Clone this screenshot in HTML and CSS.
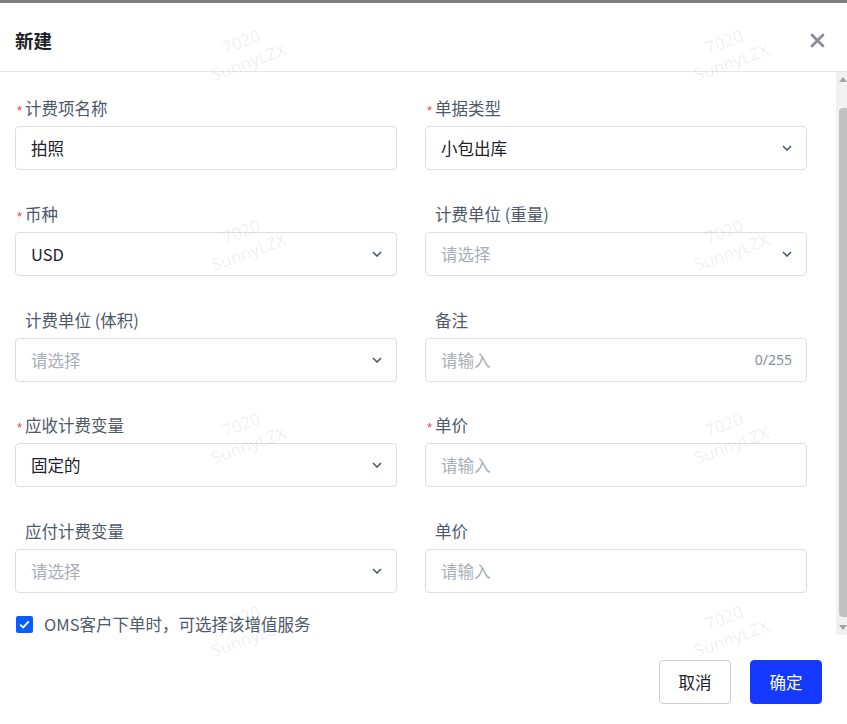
FILE: index.html
```html
<!DOCTYPE html>
<html lang="zh">
<head>
<meta charset="utf-8">
<link rel="stylesheet" href="styles.css">
</head>
<body>
<div class="page">
  <div class="backdrop-strip"></div>
  <div class="modal">
    <div class="header">
      <span class="title">新建</span>
      <svg class="close" width="15" height="15" viewBox="0 0 15 15"><path d="M2 2 L13 13 M13 2 L2 13" stroke="#868d98" stroke-width="2.8" stroke-linecap="round" fill="none"/></svg>
    </div>
    <div class="body">
      <div class="content">
        <div class="grid">
          <div class="field">
            <div class="label req">计费项名称</div>
            <div class="control"><span class="value">拍照</span></div>
          </div>
          <div class="field">
            <div class="label req">单据类型</div>
            <div class="control"><span class="value">小包出库</span><svg class="chev" width="10" height="6" viewBox="0 0 10 6"><path d="M1 1 L5 5 L9 1" stroke="#4e5969" stroke-width="1.6" fill="none"/></svg></div>
          </div>
          <div class="field">
            <div class="label req">币种</div>
            <div class="control"><span class="value">USD</span><svg class="chev" width="10" height="6" viewBox="0 0 10 6"><path d="M1 1 L5 5 L9 1" stroke="#4e5969" stroke-width="1.6" fill="none"/></svg></div>
          </div>
          <div class="field">
            <div class="label">计费单位 (重量)</div>
            <div class="control"><span class="ph">请选择</span><svg class="chev" width="10" height="6" viewBox="0 0 10 6"><path d="M1 1 L5 5 L9 1" stroke="#4e5969" stroke-width="1.6" fill="none"/></svg></div>
          </div>
          <div class="field">
            <div class="label">计费单位 (体积)</div>
            <div class="control"><span class="ph">请选择</span><svg class="chev" width="10" height="6" viewBox="0 0 10 6"><path d="M1 1 L5 5 L9 1" stroke="#4e5969" stroke-width="1.6" fill="none"/></svg></div>
          </div>
          <div class="field">
            <div class="label">备注</div>
            <div class="control"><span class="ph">请输入</span><span class="count">0/255</span></div>
          </div>
          <div class="field">
            <div class="label req">应收计费变量</div>
            <div class="control"><span class="value">固定的</span><svg class="chev" width="10" height="6" viewBox="0 0 10 6"><path d="M1 1 L5 5 L9 1" stroke="#4e5969" stroke-width="1.6" fill="none"/></svg></div>
          </div>
          <div class="field">
            <div class="label req">单价</div>
            <div class="control"><span class="ph">请输入</span></div>
          </div>
          <div class="field">
            <div class="label">应付计费变量</div>
            <div class="control"><span class="ph">请选择</span><svg class="chev" width="10" height="6" viewBox="0 0 10 6"><path d="M1 1 L5 5 L9 1" stroke="#4e5969" stroke-width="1.6" fill="none"/></svg></div>
          </div>
          <div class="field">
            <div class="label">单价</div>
            <div class="control"><span class="ph">请输入</span></div>
          </div>
        </div>
        <div class="check-row">
          <span class="checkbox"><svg width="11" height="9" viewBox="0 0 11 9"><path d="M1.2 4.6 L4.2 7.4 L9.8 1.4" stroke="#fff" stroke-width="1.8" fill="none"/></svg></span>
          <span class="check-text">OMS客户下单时，可选择该增值服务</span>
        </div>
      </div>
      <div class="scrollbar">
        <div class="arrow up"></div>
        <div class="track"><div class="thumb"></div></div>
        <div class="arrow down"></div>
      </div>
    </div>
    <div class="footer">
      <button class="btn cancel">取消</button>
      <button class="btn ok">确定</button>
    </div>
  </div>
  <div class="wm" style="left:245px;top:52px">7020<br>SunnyLZX</div>
  <div class="wm" style="left:728px;top:52px">7020<br>SunnyLZX</div>
  <div class="wm" style="left:245px;top:242px">7020<br>SunnyLZX</div>
  <div class="wm" style="left:728px;top:242px">7020<br>SunnyLZX</div>
  <div class="wm" style="left:245px;top:435px">7020<br>SunnyLZX</div>
  <div class="wm" style="left:728px;top:435px">7020<br>SunnyLZX</div>
  <div class="wm" style="left:245px;top:628px">7020<br>SunnyLZX</div>
  <div class="wm" style="left:728px;top:628px">7020<br>SunnyLZX</div>
</div>
</body>
</html>
```

FILE: styles.css
```css
* { box-sizing: border-box; }
html, body { margin: 0; padding: 0; background: #fff; }
body {
  font-family: "Noto Sans CJK SC", "Noto Sans", sans-serif;
  color: #1d2129;
}
.page {
  position: relative;
  width: 847px;
  height: 724px;
  overflow: hidden;
}
.backdrop-strip {
  height: 3px;
  background: #7f7f7f;
}
.modal {
  display: flex;
  flex-direction: column;
  height: 721px;
  background: #fff;
}
.header {
  height: 69px;
  border-bottom: 1px solid #e5e6eb;
  display: flex;
  align-items: center;
  justify-content: space-between;
  padding: 6px 22px 0 15px;
}
.title {
  font-size: 18.5px;
  font-weight: 700;
  line-height: 24px;
  color: #1d2129;
}
.close { display: block; }
.body {
  display: flex;
  height: 563px;
}
.content {
  flex: 1;
  padding: 24px 29px 0 15px;
}
.grid {
  display: grid;
  grid-template-columns: 382px 382px;
  column-gap: 28px;
  row-gap: 31.75px;
}
.field {
  display: flex;
  flex-direction: column;
  gap: 6px;
}
.label {
  position: relative;
  padding-left: 10px;
  font-size: 16.5px;
  line-height: 24px;
  color: #4e5969;
}
.label.req::before {
  content: "*";
  position: absolute;
  left: 2px;
  top: 3px;
  color: #f53f3f;
  font-size: 13px;
  font-family: "Liberation Sans", sans-serif;
}
.control {
  height: 44px;
  border: 1px solid #dcdee3;
  border-radius: 4px;
  display: flex;
  align-items: center;
  justify-content: space-between;
  padding: 0 14px 0 15px;
  font-size: 16.5px;
}
.value { color: #1d2129; }
.ph { color: #a9aeb8; }
.chev { display: block; }
.count {
  font-size: 14px;
  color: #86909c;
  font-family: "Noto Sans", sans-serif;
}
.check-row {
  display: flex;
  align-items: center;
  gap: 11px;
  height: 20px;
  margin-top: 21px;
  padding-left: 1px;
}
.checkbox {
  width: 17px;
  height: 17px;
  border-radius: 2px;
  background: #0b5cff;
  display: flex;
  align-items: center;
  justify-content: center;
}
.check-text {
  font-size: 16.5px;
  line-height: 20px;
  color: #4e5969;
}
.scrollbar {
  width: 11px;
  background: #f1f1f1;
  display: flex;
  flex-direction: column;
  align-items: flex-end;
}
.arrow {
  width: 0;
  height: 0;
  border-left: 4px solid transparent;
  border-right: 4px solid transparent;
}
.arrow.up {
  margin-top: 5px;
  border-bottom: 5px solid #a3a3a3;
}
.arrow.down {
  margin-bottom: 5px;
  border-top: 5px solid #a3a3a3;
}
.track {
  flex: 1;
  width: 100%;
  padding: 26px 0 8px 3px;
}
.thumb {
  height: 100%;
  background: #c1c1c1;
  border-radius: 4px 0 0 4px;
}
.footer {
  display: flex;
  justify-content: flex-end;
  gap: 19px;
  padding: 25px 25px 0 0;
}
.btn {
  width: 72px;
  height: 44px;
  border-radius: 4px;
  font-family: "Noto Sans CJK SC", "Noto Sans", sans-serif;
  font-size: 16.5px;
  cursor: pointer;
}
.btn.cancel {
  background: #fff;
  border: 1px solid #c9cdd4;
  color: #1d2129;
}
.btn.ok {
  background: #1539ff;
  border: 1px solid #1539ff;
  color: #fff;
}
.wm {
  position: absolute;
  transform: translate(-50%, -50%) rotate(-20deg);
  text-align: center;
  font-family: "Noto Sans", sans-serif;
  font-size: 17px;
  line-height: 22px;
  color: rgba(0, 0, 0, 0.07);
  pointer-events: none;
  white-space: nowrap;
}
```
